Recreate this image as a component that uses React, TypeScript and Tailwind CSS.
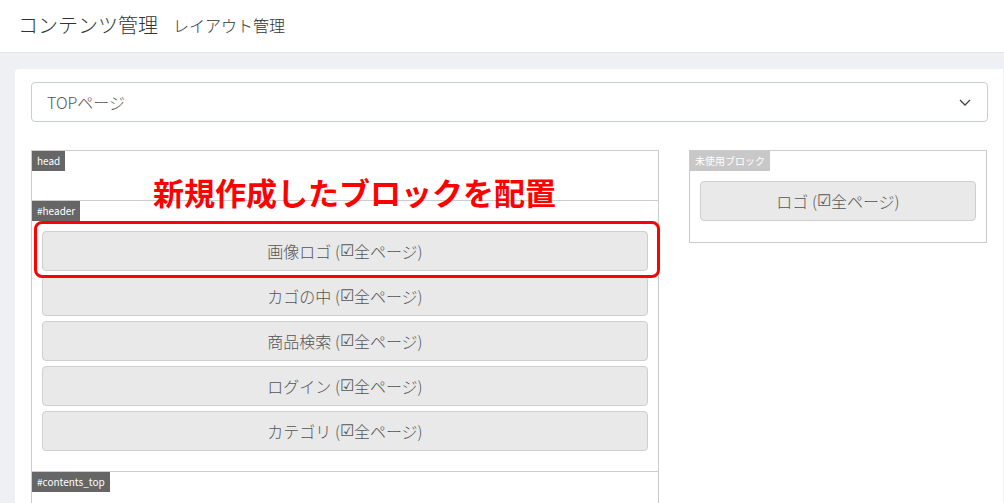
const blocks = ['画像ロゴ', 'カゴの中', '商品検索', 'ログイン', 'カテゴリ']

function BlockButton({ name }: { name: string }) {
  return (
    <div className="h-[40px] rounded border border-[#cfcfcf] bg-[#e9e9e9] flex items-center justify-center text-[16px] font-light text-[#555]">
      {name} (<span className="font-['DejaVu_Sans',sans-serif] text-[16px] leading-none">☑</span>全ページ)
    </div>
  )
}

function Tag({ label, light }: { label: string; light?: boolean }) {
  return (
    <div className={`w-fit h-[20px] px-[5px] text-[10px] leading-[20px] text-white ${light ? 'bg-[#c8c8c8]' : 'bg-[#666]'}`}>
      {label}
    </div>
  )
}

export default function App() {
  return (
    <div className="w-[1004px] h-[503px] overflow-hidden bg-[#eef0f4] font-['Noto_Sans_CJK_JP','Noto_Sans',sans-serif]">
      <div className="h-[53px] bg-white border-b border-[#e3e5e9] flex items-center pl-[18px] gap-[15px] pb-[3px]">
        <span className="text-[20px] font-light text-[#333]">コンテンツ管理</span>
        <span className="text-[16px] font-light text-[#333]">レイアウト管理</span>
      </div>

      <div className="pt-[16px] pl-[15px] pr-px">
        <div className="relative bg-white rounded-tl-[4px] pl-[16px] pr-[15px] pt-[13px] h-[440px]">
          <div className="h-[40px] rounded border border-[#c9cfcf] flex items-center justify-between pl-[15px] pr-[15px]">
            <span className="text-[16px] font-light text-[#555]">TOPページ</span>
            <svg width="14" height="14" viewBox="0 0 14 14" fill="none" stroke="#444" strokeWidth="1.3">
              <path d="M2 5l5 5 5-5" />
            </svg>
          </div>

          <div className="flex mt-[28px]">
            <div className="w-[628px] border border-[#ccc] border-b-0">
              <div className="h-[50px] border-b border-[#ccc]">
                <Tag label="head" />
              </div>
              <div className="border-b border-[#ccc] pb-[20px]">
                <Tag label="#header" />
                <div className="px-[10px] pt-[10px] flex flex-col gap-[5px]">
                  {blocks.map((b) => (
                    <BlockButton key={b} name={b} />
                  ))}
                </div>
              </div>
              <div className="h-[60px]">
                <Tag label="#contents_top" />
              </div>
            </div>

            <div className="ml-[30px] w-[298px] h-[93px] border border-[#ccc]">
              <Tag label="未使用ブロック" light />
              <div className="px-[10px] pt-[10px]">
                <BlockButton name="ロゴ" />
              </div>
            </div>
          </div>

          <div className="absolute left-[19px] top-[152px] w-[626px] h-[57px] rounded-[8px] border-[3px] border-[#f00]" />
          <div className="absolute left-[138px] top-[107px] text-[31px] font-bold leading-none text-[#f00]">
            新規作成したブロックを配置
          </div>
        </div>
      </div>
    </div>
  )
}
